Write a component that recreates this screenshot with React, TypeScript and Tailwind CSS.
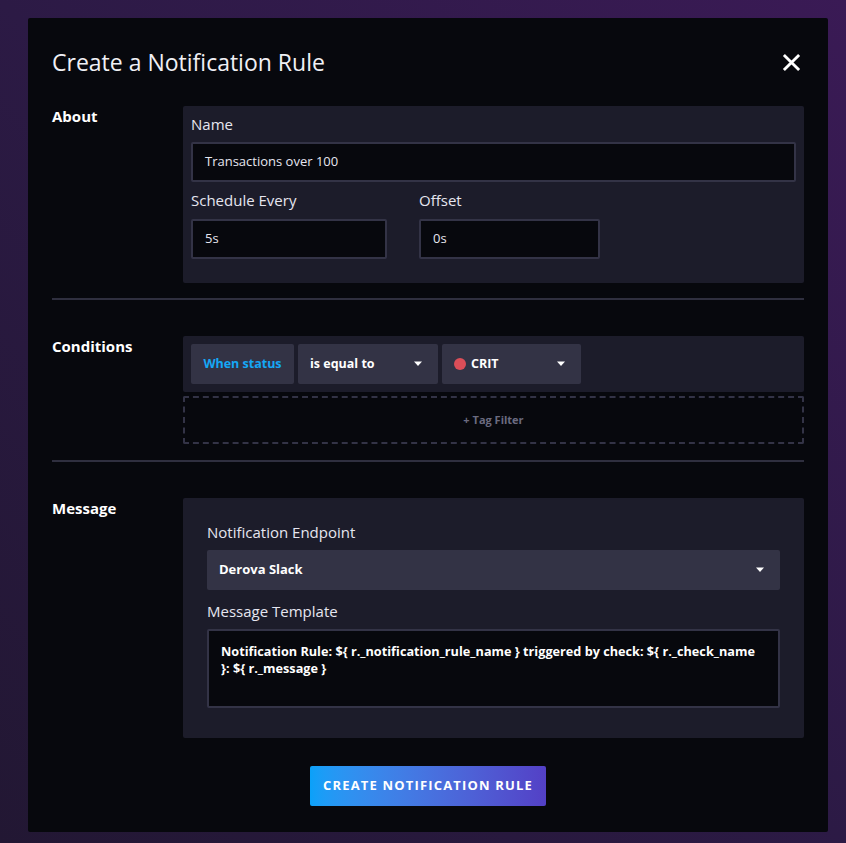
import React from 'react';

const font = { fontFamily: '"Open Sans", Lato, sans-serif' };

function Caret() {
  return (
    <svg width="10" height="6" viewBox="0 0 10 6" className="shrink-0">
      <path d="M1 0.5h8L5 5z" fill="#ffffff" />
    </svg>
  );
}

function TextInput({ value, className = '' }: { value: string; className?: string }) {
  return (
    <div className={`h-10 flex items-center px-[12px] bg-[#07080d] border-2 border-[#333346] rounded-[2px] text-[13px] text-[#e6e6f0] ${className}`}>
      {value}
    </div>
  );
}

function Label({ children }: { children: React.ReactNode }) {
  return <div className="text-[15px] text-[#e6e6f0] leading-5">{children}</div>;
}

function Section({ title, children }: { title: string; children: React.ReactNode }) {
  return (
    <div className="flex">
      <div className="w-[131px] shrink-0 text-[15px] font-bold text-white leading-5">{title}</div>
      <div className="flex-1">{children}</div>
    </div>
  );
}

export default function App() {
  return (
    <div
      style={font}
      className="w-[846px] h-[843px] bg-gradient-to-tr from-[#221733] via-[#2c1a45] to-[#3a1a55] pt-[18px] pl-[28px]"
    >
      <div className="w-[800px] h-[814px] bg-[#07080d] rounded-[2px] px-6 pt-[30px]">
        <div className="flex items-center justify-between">
          <h1 className="text-[23px] text-[#f0f0f5] leading-7">Create a Notification Rule</h1>
          <svg width="19" height="19" viewBox="0 0 20 20" className="mr-[3px]">
            <path d="M2 2L18 18M18 2L2 18" stroke="#ffffff" strokeWidth="3" />
          </svg>
        </div>

        <div className="mt-[30px]">
          <Section title="About">
            <div className="bg-[#1c1c2a] rounded-[2px] p-2 pb-[24px]">
              <Label>Name</Label>
              <TextInput value="Transactions over 100" className="mt-[8px]" />
              <div className="flex gap-[32px] mt-[8px]">
                <div className="w-[196px]">
                  <Label>Schedule Every</Label>
                  <TextInput value="5s" className="mt-[9px]" />
                </div>
                <div className="w-[181px]">
                  <Label>Offset</Label>
                  <TextInput value="0s" className="mt-[9px]" />
                </div>
              </div>
            </div>
          </Section>
        </div>

        <div className="h-[2px] bg-[#2f2f3f] mt-[15px]" />

        <div className="mt-[36px]">
          <Section title="Conditions">
            <div className="bg-[#1c1c2a] rounded-[2px] p-2 flex gap-[4px]">
              <div className="h-10 w-[103px] rounded-[2px] bg-[#333345] flex items-center justify-center text-[12.5px] font-bold text-[#15a7f5]">
                When status
              </div>
              <div className="h-10 w-[140px] rounded-[2px] bg-[#333345] flex items-center justify-between pl-[12px] pr-[15px] text-[12.5px] font-bold text-white">
                is equal to
                <Caret />
              </div>
              <div className="h-10 w-[139px] rounded-[2px] bg-[#333345] flex items-center pl-[12px] pr-[15px] text-[12.5px] font-bold text-white">
                <span className="w-[12px] h-[12px] rounded-full bg-[#dc4e58] mr-[5px]" />
                <span className="flex-1">CRIT</span>
                <Caret />
              </div>
            </div>
            <div className="mt-[4px] h-[48px] border-2 border-dashed border-[#333346] rounded-[2px] flex items-center justify-center text-[11px] font-bold text-[#6b6b80]">
              + Tag Filter
            </div>
          </Section>
        </div>

        <div className="h-[2px] bg-[#2f2f3f] mt-[16px]" />

        <div className="mt-[36px]">
          <Section title="Message">
            <div className="bg-[#1c1c2a] rounded-[2px] px-6 pt-[24px] pb-[30px]">
              <Label>Notification Endpoint</Label>
              <div className="mt-[8px] h-10 rounded-[2px] bg-[#333345] flex items-center justify-between pl-[12px] pr-[15px] text-[13px] font-bold text-white">
                Derova Slack
                <Caret />
              </div>
              <div className="mt-[11px]">
                <Label>Message Template</Label>
              </div>
              <div className="mt-[8px] h-[79px] bg-[#07080d] border-2 border-[#333346] rounded-[2px] px-[12px] pt-[12px] text-[12.7px] font-bold text-white leading-[17px]">
                Notification Rule: ${'{'} r._notification_rule_name {'}'} triggered by check: ${'{'} r._check_name {'}'}: ${'{'} r._message {'}'}
              </div>
            </div>
          </Section>
        </div>

        <div className="flex justify-center mt-[28px]">
          <div className="h-10 w-[236px] rounded-[2px] bg-gradient-to-r from-[#0aa1f9] to-[#5340c6] flex items-center justify-center text-[13px] font-bold text-white tracking-[0.09em]">
            CREATE NOTIFICATION RULE
          </div>
        </div>
      </div>
    </div>
  );
}
